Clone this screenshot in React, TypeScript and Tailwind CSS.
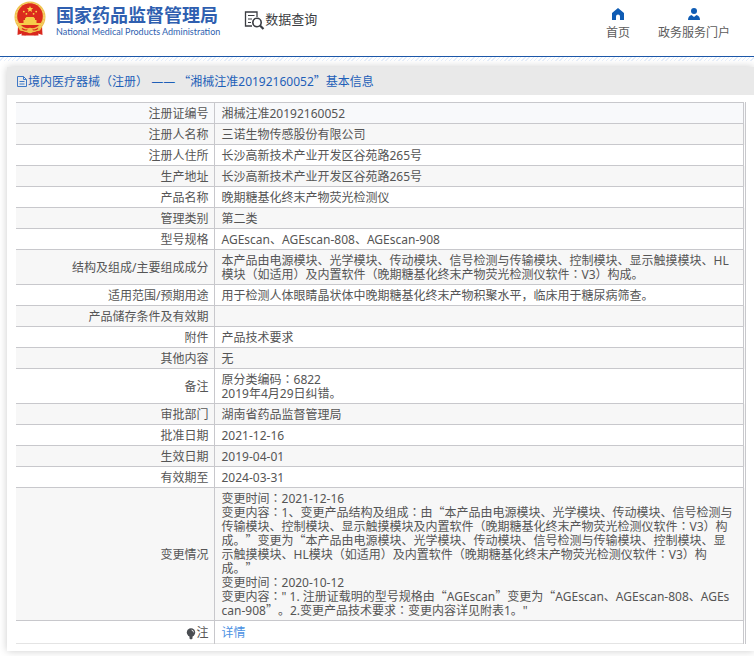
import React from 'react';

const ROWS = [
  { label: '注册证编号', lines: ['湘械注准20192160052'] },
  { label: '注册人名称', lines: ['三诺生物传感股份有限公司'] },
  { label: '注册人住所', lines: ['长沙高新技术产业开发区谷苑路265号'] },
  { label: '生产地址', lines: ['长沙高新技术产业开发区谷苑路265号'] },
  { label: '产品名称', lines: ['晚期糖基化终末产物荧光检测仪'] },
  { label: '管理类别', lines: ['第二类'] },
  { label: '型号规格', lines: ['AGEscan、AGEscan-808、AGEscan-908'] },
  {
    label: '结构及组成/主要组成成分',
    lines: [
      '本产品由电源模块、光学模块、传动模块、信号检测与传输模块、控制模块、显示触摸模块、HL模块（如适用）及内置软件（晚期糖基化终末产物荧光检测仪软件：V3）构成。',
    ],
  },
  {
    label: '适用范围/预期用途',
    lines: ['用于检测人体眼睛晶状体中晚期糖基化终末产物积聚水平，临床用于糖尿病筛查。'],
  },
  { label: '产品储存条件及有效期', lines: [] },
  { label: '附件', lines: ['产品技术要求'] },
  { label: '其他内容', lines: ['无'] },
  { label: '备注', lines: ['原分类编码：6822', '2019年4月29日纠错。'] },
  { label: '审批部门', lines: ['湖南省药品监督管理局'] },
  { label: '批准日期', lines: ['2021-12-16'] },
  { label: '生效日期', lines: ['2019-04-01'] },
  { label: '有效期至', lines: ['2024-03-31'] },
  {
    label: '变更情况',
    lines: [
      '变更时间：2021-12-16',
      '变更内容：1、变更产品结构及组成：由“本产品由电源模块、光学模块、传动模块、信号检测与传输模块、控制模块、显示触摸模块及内置软件（晚期糖基化终末产物荧光检测仪软件：V3）构成。”变更为“本产品由电源模块、光学模块、传动模块、信号检测与传输模块、控制模块、显示触摸模块、HL模块（如适用）及内置软件（晚期糖基化终末产物荧光检测仪软件：V3）构成。”',
      '变更时间：2020-10-12',
      '变更内容：" 1. 注册证载明的型号规格由“AGEscan”变更为“AGEscan、AGEscan-808、AGEscan-908”。2.变更产品技术要求：变更内容详见附表1。"',
    ],
  },
];

const Text: React.FC<{ children: string }> = ({ children }) => (
  <>
    {children.split(/([“”：]|——)/).map((part, i) => {
      if (part === '“' || part === '”') {
        return <span key={i} className="font-['Noto_Sans_CJK_SC',sans-serif] leading-none">{part}</span>;
      }
      if (part === '：') {
        return <span key={i} className="font-['Noto_Sans_CJK_JP',sans-serif] leading-none">{part}</span>;
      }
      if (part === '——') {
        return <span key={i} className="font-['DejaVu_Sans',sans-serif] leading-none">{part}</span>;
      }
      return part;
    })}
  </>
);

const Emblem = () => (
  <svg viewBox="0 0 34 36" className="h-9 w-[34px]" aria-hidden="true">
    <path d="M5 26 4.500 35l4.500-1.500 3 2h10l3-2 4.500 1.500L29 26z" fill="#d9281e" />
    <circle cx="17" cy="17" r="15.500" fill="#f0c14c" />
    <circle cx="17" cy="17" r="14" fill="none" stroke="#f9dc86" strokeWidth="1" strokeDasharray="2 1.4" />
    <circle cx="17" cy="16" r="12.800" fill="#dc2a1d" />
    <path d="m17 6 .9 2.100 2.300.2-1.800 1.500.6 2.200-2-1.200-2 1.200.6-2.200-1.800-1.500 2.300-.2z" fill="#fbd84b" />
    <g fill="#fbd84b">
      <circle cx="10.8" cy="11.6" r=".9" />
      <circle cx="13.4" cy="13.8" r=".9" />
      <circle cx="20.6" cy="13.8" r=".9" />
      <circle cx="23.2" cy="11.6" r=".9" />
    </g>
    <path d="M12 18.500 13.500 17h7l1.500 1.500V20h1.500v3H28v2H6v-2h4.500v-3H12z" fill="#f6cd4a" />
    <path d="M5 27q12 3 24 0l-2 3.500q-10 3-20 0z" fill="#f0c14c" />
    <path d="M9 28.500q4 3 8 0 4 3 8 0" fill="none" stroke="#dc2a1d" strokeWidth="1.200" />
    <circle cx="17" cy="30.500" r="2.800" fill="#f3c44c" />
    <path d="m9 31 3 1 .5 3.500h-4zM25 31l-3 1-.5 3.500h4z" fill="#d9281e" />
  </svg>
);

const SearchDocIcon = () => (
  <svg viewBox="0 0 21 20" className="h-5 w-[21px]" fill="none" stroke="#3b3d42" aria-hidden="true">
    <path d="M8 16H1.500V2H13v5" strokeWidth="1.300" />
    <path d="M4 5.500h6.500M4 9h4M4 12.500h3" strokeWidth="1.200" />
    <circle cx="13" cy="12.500" r="4.200" strokeWidth="1.600" />
    <path d="m16 15.500 3.500 3.500" strokeWidth="2.200" />
  </svg>
);

const HomeIcon = () => (
  <svg viewBox="0 0 12 12" className="size-3" fill="#0f5cb4" aria-hidden="true">
    <path d="M6 0 0 5v7h4V8.500a2 2 0 0 1 4 0V12h4V5z" />
  </svg>
);

const UserIcon = () => (
  <svg viewBox="0 0 12 12" className="size-3" fill="#0f5cb4" aria-hidden="true">
    <circle cx="6" cy="3" r="3" />
    <path d="M0 12q0-4 3.500-5L6 9l2.500-2Q12 8 12 12z" />
  </svg>
);

const DocIcon = () => (
  <svg viewBox="0 0 10 11" className="h-[11px] w-[10px]" fill="none" stroke="#3f78c6" aria-hidden="true">
    <path d="M.5.500h6l3 3v7h-9zM6.500.500v3h3M2.500 5.500h5M2.500 8h5" />
  </svg>
);

const BulbIcon = () => (
  <svg viewBox="0 0 10 12" className="inline-block h-3 w-[10px]" fill="#4a4d52" aria-hidden="true">
    <circle cx="5" cy="4.500" r="4.200" />
    <path d="M3.500 8h3v2.500l-.8.8H4.300l-.8-.8z" />
    <path d="M5.500 2q2 .3 2 2.300" fill="none" stroke="#fff" strokeWidth=".8" />
  </svg>
);

const App: React.FC = () => {
  return (
    <div className="overflow-hidden bg-white pb-2 font-['Noto_Sans','Noto_Sans_CJK_SC',sans-serif] text-xs text-[#555] [text-spacing-trim:space-all]">
      <header className="flex h-[57px] items-start justify-between border-b border-[#1c57a8] pr-6 pl-[13px]">
        <div className="flex">
          <Emblem />
          <div className="ml-[9px] pt-[3px] text-[#2f5fb0]">
            <h1 className="text-lg leading-6 font-bold">国家药品监督管理局</h1>
            <p className="font-[Lato,sans-serif] text-[9px] leading-[10px]">
              National Medical Products Administration
            </p>
          </div>
          <div className="ml-6 flex h-10 items-center text-[13px] text-[#3b3d42]">
            <SearchDocIcon />
            <span>数据查询</span>
          </div>
        </div>
        <nav className="flex gap-7 pt-2 text-[#5c5c5c]">
          <a href="#home" className="flex flex-col items-center gap-[5px]">
            <HomeIcon />
            首页
          </a>
          <a href="#portal" className="flex flex-col items-center gap-[5px]">
            <UserIcon />
            政务服务门户
          </a>
        </nav>
      </header>

      <div className="mb-[6px] h-1 bg-[repeating-linear-gradient(135deg,#fff_0_2px,#e6eefa_2px_3px)]" />

      <main className="ml-[7px] bg-white pb-[7px] shadow-[0_0_8px_rgba(0,0,0,0.2)]">
        <h2 className="flex h-7 items-center bg-[#e9e9e9] pt-px pl-[10px] text-[#1e5fb8]">
          <DocIcon />
          <span className="ml-px whitespace-pre">
            <Text>境内医疗器械（注册） —— “湘械注准20192160052”基本信息</Text>
          </span>
        </h2>

        <div className="pt-[7px] pr-2 pl-[9px]">
          <table className="w-full border-collapse border-t border-r-[3px] border-b border-[#c8c8cc] border-r-[#c8c8cc] border-b-[#e4e4e4] leading-[14px] [border-right-style:double]">
            <tbody>
              {ROWS.map((row) => (
                <tr key={row.label} className="border-b border-[#c8c8cc] first:bg-[#f8f9fb] even:bg-[#f7f7f7]">
                  <th scope="row" className="w-[198px] border-r border-[#c8c8cc] pt-1 pr-[5px] pb-[2px] text-right font-normal">
                    {row.label}
                  </th>
                  <td className="h-5 pt-1 pr-2 pb-[2px] pl-[7px] break-all">
                    {row.lines.map((line, i) => (
                      <p key={i}>
                        <Text>{line}</Text>
                      </p>
                    ))}
                  </td>
                </tr>
              ))}
              <tr className="bg-white">
                <th scope="row" className="border-r border-[#c8c8cc] pt-1 pr-[5px] pb-[2px] text-right font-normal">
                  <BulbIcon />注
                </th>
                <td className="h-[23px] pt-1 pr-2 pb-[2px] pl-[7px]">
                  <a href="#detail" className="text-[#4a90e2]">详情</a>
                </td>
              </tr>
            </tbody>
          </table>
        </div>
      </main>
    </div>
  );
};

export default App;
